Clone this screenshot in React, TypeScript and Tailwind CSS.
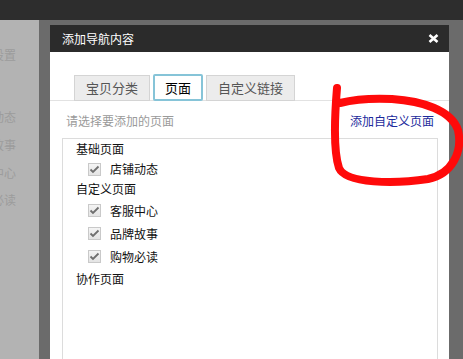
import React from 'react';

const font = { fontFamily: '"Noto Sans CJK SC", "Noto Sans", sans-serif' };

const sideItems = [
  { text: '店铺设置', top: 'mt-[29px]' },
  { text: '店铺动态', top: 'mt-[50px]' },
  { text: '品牌故事', top: 'mt-[16px]' },
  { text: '客服中心', top: 'mt-[16px]' },
  { text: '购物必读', top: 'mt-[15px]' },
];

const rows: { label: string; check?: boolean; h: string }[] = [
  { label: '基础页面', h: 'h-[20px]' },
  { label: '店铺动态', check: true, h: 'h-[20px]' },
  { label: '自定义页面', h: 'h-[20px]' },
  { label: '客服中心', check: true, h: 'h-[23px]' },
  { label: '品牌故事', check: true, h: 'h-[23px]' },
  { label: '购物必读', check: true, h: 'h-[23px]' },
  { label: '协作页面', h: 'h-[22px]' },
];

const CheckBox = () => (
  <span className="w-[13px] h-[13px] border border-[#c9c9c9] bg-gradient-to-b from-[#f4f4f4] to-[#e4e4e4] flex items-center justify-center">
    <svg width="11" height="9" viewBox="0 0 11 9">
      <path d="M1.5 4.5 L4 7 L9.5 1.5" fill="none" stroke="#6f6f6f" strokeWidth="1.8" />
    </svg>
  </span>
);

export default function App() {
  return (
    <div className="w-[463px] h-[359px] relative overflow-hidden bg-[#b3b3b3] flex flex-col" style={font}>
      {/* top bar */}
      <div className="h-[20px] bg-[#2d2d2d] shrink-0" />

      <div className="flex flex-1 min-h-0">
        {/* dimmed page sidebar */}
        <div className="w-[39px] shrink-0 overflow-hidden flex flex-col">
          {sideItems.map((s, i) => (
            <div
              key={i}
              className={`${s.top} h-[12px] -ml-[32px] whitespace-nowrap text-[12px] leading-[12px] text-[#9c9c9c]`}
            >
              {s.text}
            </div>
          ))}
        </div>

        {/* dialog frame */}
        <div className="flex-1 bg-[#6b6b6b] pt-[5px] pl-[11px] pr-[14px] flex flex-col">
          <div className="flex-1 flex flex-col bg-white">
            {/* header */}
            <div className="h-[27px] bg-[#2b2b2b] flex items-center justify-between pl-[12px] pr-[10px] shrink-0">
              <span className="text-white text-[12px] leading-none">添加导航内容</span>
              <svg width="11" height="9" viewBox="0 0 11 9">
                <path d="M1.5 1 L9.5 8 M9.5 1 L1.5 8" stroke="#ffffff" strokeWidth="2.6" />
              </svg>
            </div>

            {/* tabs */}
            <div className="pt-[22px] pl-[24px] flex items-end gap-[3px] border-b border-[#e2e2e2]">
              <div className="h-[26px] px-[11px] -mb-px flex items-center bg-[#ececec] border border-[#d4d4d4] text-[13px] text-[#555]">
                宝贝分类
              </div>
              <div className="h-[27px] px-[10px] -mb-px flex items-center bg-white border-2 border-[#86c4d8] rounded-[2px] text-[13px] text-black">
                页面
              </div>
              <div className="h-[26px] px-[11px] -mb-px flex items-center bg-[#ececec] border border-[#d4d4d4] text-[13px] text-[#555]">
                自定义链接
              </div>
            </div>

            {/* label row */}
            <div className="mt-[13px] h-[14px] flex items-center justify-between pl-[16px] pr-[15px] text-[12px] leading-none">
              <span className="text-[#9a9a9a]">请选择要添加的页面</span>
              <span className="text-[#1c2a9c]">添加自定义页面</span>
            </div>

            {/* list box */}
            <div className="mt-[10px] ml-[12px] w-[376px] h-[260px] border border-[#dcdcdc] flex flex-col text-[12px] text-[#111]">
              {rows.map((r, i) =>
                r.check ? (
                  <div key={i} className={`${r.h} flex items-center pl-[25px] gap-[9px]`}>
                    <CheckBox />
                    <span className="leading-none">{r.label}</span>
                  </div>
                ) : (
                  <div key={i} className={`${r.h} flex items-center pl-[13px]`}>
                    <span className="leading-none">{r.label}</span>
                  </div>
                )
              )}
            </div>
          </div>
        </div>
      </div>

      {/* red hand-drawn circle */}
      <svg className="absolute left-0 top-0 pointer-events-none" width="463" height="359" viewBox="0 0 463 359">
        <path
          d="M337 88 C335 112 333 150 339 168 C346 184 395 184 428 179 C452 174 463 152 458 130 C451 110 422 101 392 99 C372 98 352 100 340 103"
          fill="none"
          stroke="#ff0a0a"
          strokeWidth="8"
          strokeLinecap="round"
          strokeLinejoin="round"
        />
      </svg>
    </div>
  );
}
